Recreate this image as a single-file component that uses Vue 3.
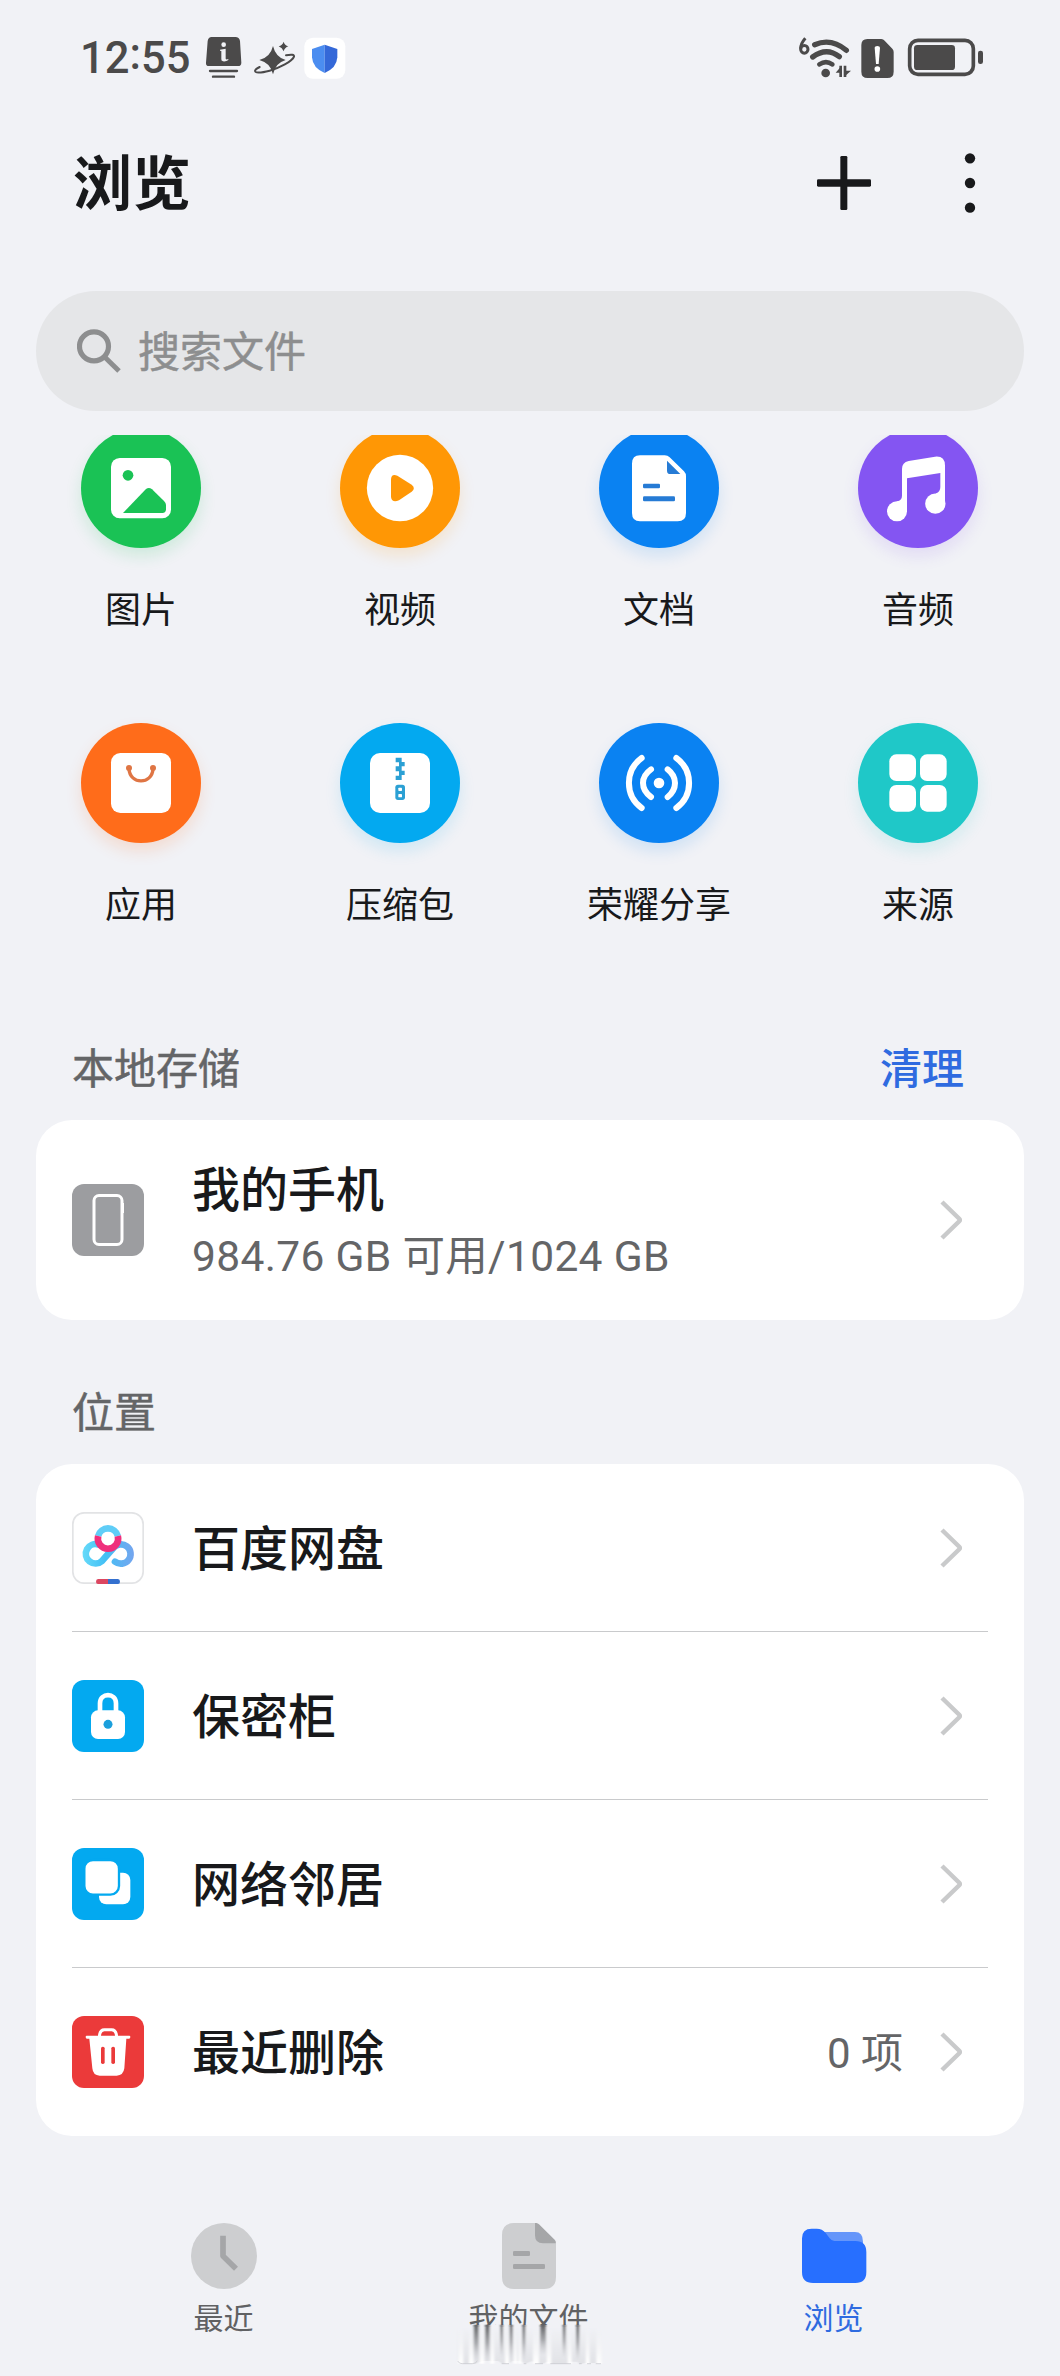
<script setup>
const categories = [
  { key: 'image', label: '图片', color: '#1ac255', shadow: 'rgba(26,194,85,.16)', box: '183 473 360 360' },
  { key: 'video', label: '视频', color: '#ff9705', shadow: 'rgba(255,151,5,.16)', box: '960 473 360 360' },
  { key: 'doc', label: '文档', color: '#0a82f2', shadow: 'rgba(10,130,242,.14)', box: '177 23 360 360' },
  { key: 'audio', label: '音频', color: '#8455f2', shadow: 'rgba(132,85,242,.14)', box: '954 23 360 360' },
  { key: 'app', label: '应用', color: '#ff6c1a', shadow: 'rgba(255,108,26,.16)', box: '183 69 360 360' },
  { key: 'zip', label: '压缩包', color: '#03a9f0', shadow: 'rgba(3,169,240,.14)', box: '960 69 360 360' },
  { key: 'share', label: '荣耀分享', color: '#0a82f2', shadow: 'rgba(10,130,242,.14)', box: '177 69 360 360' },
  { key: 'source', label: '来源', color: '#1fc8c8', shadow: 'rgba(31,200,200,.14)', box: '954 69 360 360' },
]

const places = [
  { key: 'pan', label: '百度网盘', box: '156 396 216 216' },
  { key: 'safe', label: '保密柜', box: '156 900 216 216' },
  { key: 'net', label: '网络邻居', box: '156 174 216 216' },
  { key: 'trash', label: '最近删除', box: '156 678 216 216', note: '0 项' },
]

const tabs = [
  { key: 'recent', label: '最近', box: '93 99 198 198', w: 66 },
  { key: 'files', label: '我的文件', box: '1026 99 162 198', w: 54 },
  { key: 'browse', label: '浏览', box: '303 789 198 198', w: 66, active: true },
]

const darkStreaks = [
  { x: 944, w: 15, h: 112 }, { x: 978, w: 14, h: 112 }, { x: 1024, w: 8, h: 100 },
  { x: 1052, w: 9, h: 108 }, { x: 1090, w: 9, h: 110 }, { x: 1143, w: 18, h: 92 },
  { x: 1211, w: 9, h: 100 }, { x: 1251, w: 10, h: 108 },
]
const lightStreaks = [
  { x: 898, w: 15 }, { x: 930, w: 14 }, { x: 962, w: 14 }, { x: 994, w: 12 }, { x: 1038, w: 12 },
  { x: 1064, w: 10 }, { x: 1078, w: 10 }, { x: 1122, w: 18 }, { x: 1163, w: 14 }, { x: 1226, w: 12 },
  { x: 1280, w: 12 }, { x: 1312, w: 16 },
]
</script>

<template>
  <div class="screen">
    <div class="status">
      <span class="time">12<i>:</i>55</span>
      <svg class="s-info" width="37" height="43" viewBox="465 78 111 129">
        <path fill="#4b4a4a" d="M485 81H556Q568 81 570 93L574 158Q574 168 564 168H477Q467 168 468 158L473 93Q475 81 485 81Z" />
        <path stroke="#4b4a4a" stroke-width="7" stroke-linecap="round" d="M480 183H561M489 200H552" />
        <circle cx="521" cy="104" r="7" fill="#f1f2f6" />
        <path fill="#f1f2f6" d="M510 119L527 116V146Q528 150 535 147V150Q529 155 519 154Q513 153 514 147V123L510 122Z" />
      </svg>
      <svg class="s-star" width="43" height="34" viewBox="609 90 129 102" fill="#4b4a4a">
        <path d="M669 105Q677 139 707 147Q677 155 669 190Q661 155 628 147Q661 139 669 105Z" />
        <path d="M701 92Q704 103 715 106Q704 110 701 121Q697 110 686 106Q697 103 701 92Z" />
        <path fill="none" stroke="#4b4a4a" stroke-width="6" stroke-linecap="round" d="M708 133Q734 128 732 137C727 151 688 171 659 179Q616 190 615 180Q615 175 629 168" />
      </svg>
      <svg class="s-shield" width="42" height="42" viewBox="765 78 126 126">
        <rect x="766" y="80" width="123" height="123" rx="26" fill="#fff" />
        <path fill="#4b8df0" d="M827 101L789 114V139Q791 171 827 186Z" />
        <path fill="#3468d8" d="M827 101L865 114V139Q863 171 827 186Z" />
      </svg>
      <div class="grow"></div>
      <svg class="s-wifi" width="54" height="42" viewBox="114 78 162 126" fill="none" stroke="#4b4a4a">
        <path stroke-width="9" d="M136 82Q122 98 122 113" />
        <ellipse cx="133" cy="115" rx="11" ry="11.500" stroke-width="9" />
        <path stroke-width="16" stroke-linecap="round" d="M164 101Q214 80 259 118M158 138Q200 107 238 137" />
        <path stroke-width="14" stroke-linecap="round" d="M178 160Q198 147 217 160" />
        <circle cx="197" cy="186" r="13" fill="#4b4a4a" stroke="none" />
        <path stroke-width="8" d="M242 164V198M255 164V198" />
        <path fill="#4b4a4a" stroke="none" d="M245 164V185H227ZM252 198V179H273Z" />
      </svg>
      <svg class="s-sim" width="33" height="40" viewBox="303 81 99 120">
        <path fill="#4b4a4a" d="M322 84H364Q370 84 374 89L397 113Q401 117 401 123V182Q401 201 382 201H323Q304 201 304 182V102Q304 84 322 84Z" />
        <path fill="#fff" d="M344 110Q344 105 352 105Q360 105 360 110L356 159H348Z" />
        <circle cx="352" cy="174" r="8.500" fill="#fff" />
      </svg>
      <svg class="s-bat" width="77" height="39" viewBox="441 84 231 117">
        <rect x="449" y="91" width="191" height="102" rx="25" fill="none" stroke="#4b4a4a" stroke-width="11" />
        <rect x="462" y="105" width="123" height="75" rx="10" fill="#4b4a4a" />
        <rect x="654" y="122" width="15" height="40" rx="7" fill="#4b4a4a" />
      </svg>
    </div>

    <header class="header">
      <h1>浏览</h1>
      <svg width="56" height="56" viewBox="168 435 168 168" fill="#18191b">
        <rect x="171" y="508" width="162" height="22" rx="4" />
        <rect x="241" y="438" width="21" height="162" rx="4" />
      </svg>
      <svg class="more" width="12" height="62" viewBox="612 426 36 186" fill="#18191b">
        <circle cx="630" cy="445" r="15.500" /><circle cx="630" cy="519" r="15.500" /><circle cx="630" cy="593" r="15.500" />
      </svg>
    </header>

    <div class="search">
      <svg width="44" height="44" viewBox="171 177 132 132" fill="none" stroke="#8d8e8f">
        <circle cx="222" cy="229" r="43.500" stroke-width="15.500" />
        <path stroke-width="15" d="M254 261L297 303" />
      </svg>
      <span>搜索文件</span>
    </div>

    <div class="scroll">
      <div class="grid">
        <div v-for="c in categories" :key="c.key" class="cat">
          <div class="disc" :style="{ background: c.color, boxShadow: `0 8px 16px ${c.shadow}` }">
            <svg width="120" height="120" :viewBox="c.box" fill="#fff">
              <template v-if="c.key === 'image'">
                <rect x="273" y="563" width="180" height="181" rx="26" />
                <circle cx="324" cy="615" r="16" :fill="c.color" />
                <path :fill="c.color" d="M309 728L378 656Q387 649 396 657L432 692Q438 698 438 704V717Q438 728 427 728Z" />
              </template>
              <template v-else-if="c.key === 'video'">
                <circle cx="1140" cy="653" r="99.500" />
                <path :fill="c.color" d="M1113 627Q1114 609 1132 616L1175 643Q1188 653 1175 664L1137 690Q1116 699 1113 680Z" />
              </template>
              <template v-else-if="c.key === 'doc'">
                <path d="M300 105H374Q383 105 389 111L432 153Q438 159 438 168V278Q438 303 413 303H300Q276 303 276 278V130Q276 105 300 105Z" />
                <path fill="#267bd5" d="M381 121L421 161H391Q381 161 381 151Z" />
                <rect x="309" y="190" width="51" height="14" rx="4" fill="#267bd5" />
                <rect x="309" y="228" width="96" height="15" rx="4" fill="#267bd5" />
              </template>
              <template v-else-if="c.key === 'audio'">
                <circle cx="1071" cy="273" r="30" />
                <circle cx="1186" cy="250" r="30.500" />
                <path d="M1071 243Q1086 240 1086 226V146Q1086 126 1106 122L1185 109Q1215 106 1215 136V250H1196L1188 219Q1201 215 1201 200V158L1101 174V273H1078Z" />
              </template>
              <template v-else-if="c.key === 'app'">
                <rect x="273" y="159" width="180" height="180" rx="28" />
                <circle cx="327" cy="204" r="9" fill="#df7544" /><circle cx="399" cy="204" r="9" fill="#df7544" />
                <path fill="none" stroke="#df7544" stroke-width="10" d="M327 206C329 255 397 255 399 206" />
              </template>
              <template v-else-if="c.key === 'zip'">
                <rect x="1050" y="159" width="180" height="180" rx="30" />
                <path fill="#2ba0d4" d="M1127 173H1145V186H1154V199H1145V212H1154V225H1145V240H1127V227H1137V214H1127V199H1137V187H1127Z" />
                <rect x="1126" y="254" width="29" height="46" rx="8" fill="#2ba0d4" />
                <rect x="1135" y="263" width="11" height="10" rx="2" /><rect x="1135" y="282" width="11" height="10" rx="2" />
              </template>
              <template v-else-if="c.key === 'share'">
                <circle cx="357" cy="249" r="16" />
                <path fill="none" stroke="#fff" stroke-width="18" stroke-linecap="round" stroke-linejoin="round" d="M305 174C254 211 254 287 305 324M409 174C460 211 460 287 409 324M333 208Q309 225 309 249T333 291M383 208Q405 225 405 249T383 291" />
              </template>
              <template v-else>
                <rect x="1048" y="163" width="80" height="80" rx="21" /><rect x="1140" y="163" width="80" height="80" rx="21" />
                <rect x="1048" y="255" width="80" height="80" rx="21" /><rect x="1140" y="255" width="80" height="80" rx="21" />
              </template>
            </svg>
          </div>
          <span>{{ c.label }}</span>
        </div>
      </div>
    </div>

    <div class="section first">
      <span>本地存储</span>
      <a>清理</a>
    </div>
    <div class="card">
      <div class="row device">
        <svg class="ico" width="72" height="72" viewBox="0 0 72 72">
          <rect width="72" height="72" rx="12" fill="#9c9da0" />
          <rect x="22" y="11.500" width="28" height="49" rx="5" fill="none" stroke="#fff" stroke-width="3" />
          <path stroke="#fff" stroke-width="1" d="M51.500 19V29" />
        </svg>
        <div class="info">
          <div class="name">我的手机</div>
          <div class="sub">984.76 GB 可用/1024 GB</div>
        </div>
        <svg class="chev" width="22" height="40" viewBox="0 0 22 40"><path d="M2 2L19 18.500Q20.500 20 19 21.500L2 38" /></svg>
      </div>
    </div>

    <div class="section"><span>位置</span></div>
    <div class="card">
      <div v-for="p in places" :key="p.key" class="row">
        <svg class="ico" width="72" height="72" :viewBox="p.box">
          <template v-if="p.key === 'pan'">
            <defs>
              <linearGradient id="panA" x1="186" y1="0" x2="342" y2="0" gradientUnits="userSpaceOnUse">
                <stop offset="0" stop-color="#67dbf9" /><stop offset=".45" stop-color="#43bff5" /><stop offset="1" stop-color="#75a5ef" />
              </linearGradient>
            </defs>
            <rect x="158.500" y="398.500" width="211" height="211" rx="34" fill="#fff" stroke="#e2e3e5" stroke-width="5" />
            <path fill="none" stroke="url(#panA)" stroke-width="20" stroke-linecap="round" d="M236 494A29 29 0 1 0 246 543L280 504A29 29 0 1 1 285 545" />
            <path fill="none" stroke="#5fcdf7" stroke-width="20" d="M234.500 468A30.500 30.500 0 0 1 293.500 468" />
            <path fill="none" stroke="#ef2f7c" stroke-width="20" d="M234.500 468A30.500 30.500 0 1 0 293.500 468" />
            <path fill="#dc4660" d="M234 597H264V612H234Q228 612 228 605Q228 597 234 597Z" />
            <path fill="#3470cf" d="M264 597H294Q300 597 300 605Q300 612 294 612H264Z" />
          </template>
          <template v-else-if="p.key === 'safe'">
            <rect x="156" y="900" width="216" height="216" rx="36" fill="#03a9f0" />
            <path fill="none" stroke="#fff" stroke-width="14" d="M240 996V970C240 937 288 937 288 970V996" />
            <rect x="213" y="991" width="102" height="86" rx="21" fill="#fff" />
            <circle cx="264" cy="1033" r="13.500" fill="#1b9fdc" />
          </template>
          <template v-else-if="p.key === 'net'">
            <rect x="156" y="174" width="216" height="216" rx="36" fill="#03a9f0" />
            <rect x="237" y="248" width="94" height="95" rx="22" fill="#fff" />
            <rect x="193" y="210" width="104" height="104" rx="26" fill="#fff" stroke="#03a9f0" stroke-width="7" />
          </template>
          <template v-else>
            <rect x="156" y="678" width="216" height="216" rx="36" fill="#eb3a3a" />
            <path fill="none" stroke="#fff" stroke-width="9" d="M238 741Q239 719 253 719H275Q289 719 290 741" />
            <path fill="#fff" d="M200 737H328Q331 737 331 741Q331 746 327 746H319L313 835Q310 857 290 857H239Q219 857 217 835L208 746H201Q197 746 197 741Q197 737 200 737Z" />
            <rect x="243" y="770" width="11" height="52" rx="5" fill="#eb3a3a" /><rect x="274" y="770" width="11" height="52" rx="5" fill="#eb3a3a" />
          </template>
        </svg>
        <div class="name grow">{{ p.label }}</div>
        <span v-if="p.note" class="note">{{ p.note }}</span>
        <svg class="chev" width="22" height="40" viewBox="0 0 22 40"><path d="M2 2L19 18.500Q20.500 20 19 21.500L2 38" /></svg>
      </div>
    </div>

    <nav class="tabs">
      <div v-for="t in tabs" :key="t.key" class="tab" :class="{ active: t.active }">
        <svg :width="t.w" height="66" :viewBox="t.box">
          <template v-if="t.key === 'recent'">
            <circle cx="192" cy="198" r="99" fill="#cdced0" />
            <path fill="none" stroke="#a5a6a8" stroke-width="17" stroke-linejoin="round" d="M189 137V198L228 236" />
          </template>
          <template v-else-if="t.key === 'files'">
            <path fill="#cdced0" d="M1062 99H1125L1188 160V261Q1188 297 1152 297H1062Q1026 297 1026 261V135Q1026 99 1062 99Z" />
            <path fill="#a5a6a8" d="M1125 99Q1132 98 1137 103L1184 149Q1189 154 1187 160H1149Q1125 160 1125 136Z" />
            <rect x="1059" y="183" width="51" height="15" rx="4" fill="#a5a6a8" />
            <rect x="1059" y="222" width="96" height="15" rx="4" fill="#a5a6a8" />
          </template>
          <template v-else>
            <path fill="#6596fa" d="M350 816H465Q489 816 489 845V900H350Z" />
            <path fill="#276fff" d="M335 806H350Q367 806 377 819L389 835Q395 843 403 843H466Q499 843 499 876V936Q499 969 466 969H339Q306 969 306 936V835Q306 806 335 806Z" />
          </template>
        </svg>
        <span>{{ t.label }}</span>
        <svg v-if="t.key === 'files'" class="smear" width="156" height="44" viewBox="876 400 468 132">
          <defs>
            <linearGradient id="dk" x1="0" y1="0" x2="0" y2="1">
              <stop offset="0" stop-color="#606164" /><stop offset=".5" stop-color="#98999d" stop-opacity=".8" /><stop offset="1" stop-color="#c0c1c5" stop-opacity="0" />
            </linearGradient>
            <linearGradient id="lt" x1="0" y1="0" x2="0" y2="1">
              <stop offset="0" stop-color="#fff" stop-opacity="0" /><stop offset="1" stop-color="#fff" />
            </linearGradient>
            <linearGradient id="bs" x1="0" y1="0" x2="0" y2="1">
              <stop offset="0" stop-color="#f1f2f6" /><stop offset="1" stop-color="#e1e2e6" />
            </linearGradient>
            <filter id="soft" x="-10%" y="-10%" width="120%" height="120%"><feGaussianBlur stdDeviation="2.500 1" /></filter>
          </defs>
          <rect x="876" y="406" width="468" height="126" fill="#f1f2f6" />
          <g filter="url(#soft)">
            <path fill="url(#bs)" d="M896 412H1328V520H1278L1262 524L1256 516H1238L1228 522H1176L1164 516L1152 522H1128L1118 514L1100 522L1086 514H1060L1050 522H1030L1018 514H966L950 522H904L896 512Z" />
            <rect v-for="s in lightStreaks" :key="s.x" :x="s.x" y="412" :width="s.w" height="110" fill="url(#lt)" />
            <rect v-for="s in darkStreaks" :key="s.x" :x="s.x" y="405" :width="s.w" :height="s.h" fill="url(#dk)" />
          </g>
          <path fill="none" stroke="#c3c4c8" stroke-width="2" d="M896 514Q900 522 910 522H940Q950 522 955 514M1028 522H1050M1094 522H1102M1128 522H1152M1174 522H1236M1260 522H1268M1284 522H1296M1310 522H1326" />
        </svg>
      </div>
    </nav>
  </div>
</template>

<style>
body {
  background: #f1f2f6;
}
</style>

<style scoped>
.screen {
  width: 1060px;
  height: 2376px;
  overflow: hidden;
  background: #f1f2f6;
  color: #18191b;
  font-family: Roboto, "Noto Sans CJK SC", sans-serif;
}
svg {
  display: block;
  flex: none;
}
.grow {
  flex: 1;
}
.status {
  display: flex;
  align-items: center;
  height: 115px;
  padding: 0 76px 0 80px;
}
.time {
  width: 125px;
  padding-top: 2px;
  font-size: 43.5px;
  font-weight: 500;
  line-height: 52px;
  color: #4b4a4a;
}
.time i {
  position: relative;
  top: -4px;
  font-style: normal;
}
.s-star {
  margin-left: 11px;
}
.s-shield {
  margin-left: 8px;
}
.s-sim {
  margin-left: 9px;
}
.s-bat {
  margin-left: 13px;
}
.header {
  display: flex;
  align-items: center;
  height: 136px;
  padding: 0 84px 0 73px;
}
.header h1 {
  flex: 1;
  margin: 0;
  padding-top: 3px;
  font-size: 59px;
  line-height: 80px;
  font-weight: 700;
}
.more {
  margin-left: 92px;
}
.search {
  display: flex;
  align-items: center;
  gap: 17px;
  height: 120px;
  margin: 40px 36px 0;
  padding-left: 41px;
  box-sizing: border-box;
  border-radius: 60px;
  background: #e5e6e8;
  color: #8d8e8f;
  font-size: 42px;
}
.search span {
  padding-bottom: 5px;
  -webkit-text-stroke: 0.5px;
}
.scroll {
  margin-top: 24px;
  overflow: hidden;
}
.grid {
  display: grid;
  grid-template-columns: repeat(4, 259px);
  row-gap: 92px;
  margin: -7px 12.5px 0 11.5px;
}
.cat {
  display: flex;
  flex-direction: column;
  align-items: center;
}
.disc {
  width: 120px;
  height: 120px;
  border-radius: 50%;
}
.cat span {
  margin-top: 43px;
  font-size: 36px;
  line-height: 40px;
}
.section {
  display: flex;
  justify-content: space-between;
  height: 60px;
  margin: 64px 0 20px;
  padding: 0 96px 0 72px;
  font-size: 42px;
  line-height: 60px;
  color: #646567;
}
.section span {
  -webkit-text-stroke: 0.5px;
}
.section.first {
  margin-top: 114px;
}
.section a {
  color: #2f6be0;
  font-weight: 500;
}
.card {
  margin: 0 36px;
  padding: 0 36px;
  border-radius: 36px;
  background: #fff;
}
.row {
  display: flex;
  align-items: center;
  box-sizing: border-box;
  height: 168px;
  padding-right: 26px;
}
.row + .row {
  box-shadow: 0 -1px #c9cacc;
}
.row.device {
  height: 200px;
}
.ico {
  margin-right: 48px;
}
.info {
  flex: 1;
  padding-top: 3px;
}
.name {
  padding-top: 4px;
  font-size: 48px;
  line-height: 66px;
  font-weight: 500;
}
.sub {
  font-size: 42.5px;
  line-height: 66px;
  letter-spacing: 0.33px;
  color: #646567;
}
.note {
  margin-right: 37px;
  padding-bottom: 5px;
  font-size: 42px;
  color: #646567;
}
.chev path {
  fill: none;
  stroke: #c9cacb;
  stroke-width: 4.5;
}
.tabs {
  display: flex;
  margin: 87px 74px 0 71px;
}
.tab {
  position: relative;
  flex: 1;
  display: flex;
  flex-direction: column;
  align-items: center;
  color: #606163;
}
.tab span {
  margin-top: 12px;
  font-size: 30px;
  line-height: 36px;
}
.tab.active {
  color: #2f6be0;
}
.smear {
  position: absolute;
  left: 75px;
  top: 100px;
}
</style>
